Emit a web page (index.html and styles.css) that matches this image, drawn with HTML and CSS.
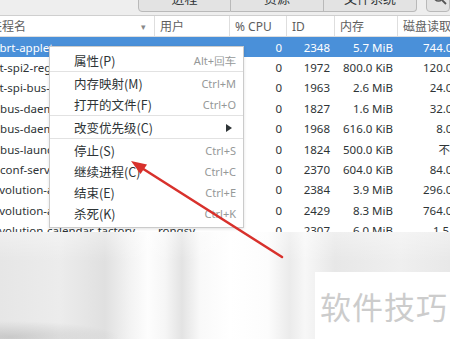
FILE: index.html
```html
<!DOCTYPE html>
<html>
<head>
  <meta charset="utf-8">
  <title>系统监视器</title>
  <link rel="stylesheet" href="styles.css">
</head>
<body>
  <div class="screen">
    <!-- barra superior con pestañas -->
    <div class="toolbar">
      <div class="tabs">
        <span class="tab">进程</span>
        <span class="tab">资源</span>
        <span class="tab">文件系统</span>
      </div>
      <span class="search">
        <svg width="16" height="16" viewBox="0 0 16 16">
          <circle cx="6.5" cy="6.5" r="4.5" fill="none" stroke="#555" stroke-width="1.6"/>
          <line x1="10" y1="10" x2="14" y2="14" stroke="#555" stroke-width="1.8"/>
        </svg>
      </span>
    </div>

    <div class="row head">
      <div class="cell name"><span class="clip">进程名</span><span class="sort">▾</span></div>
      <div class="cell">用户</div>
      <div class="cell">% CPU</div>
      <div class="cell">ID</div>
      <div class="cell">内存</div>
      <div class="cell">磁盘读取</div>
    </div>

    <div class="rows">
      <div class="row selected">
        <div class="cell name"><span class="clip">abrt-applet</span></div>
        <div class="cell">rongsy</div><div class="cell num">0</div><div class="cell num">2348</div>
        <div class="cell num">5.7 MiB</div><div class="cell num">744.0 KiB</div>
      </div>
      <div class="row">
        <div class="cell name"><span class="clip">at-spi2-registryd</span></div>
        <div class="cell">rongsy</div><div class="cell num">0</div><div class="cell num">1972</div>
        <div class="cell num">800.0 KiB</div><div class="cell num">120.0 KiB</div>
      </div>
      <div class="row">
        <div class="cell name"><span class="clip">at-spi-bus-launcher</span></div>
        <div class="cell">rongsy</div><div class="cell num">0</div><div class="cell num">1963</div>
        <div class="cell num">2.6 MiB</div><div class="cell num">24.0 KiB</div>
      </div>
      <div class="row">
        <div class="cell name"><span class="clip">dbus-daemon</span></div>
        <div class="cell">rongsy</div><div class="cell num">0</div><div class="cell num">1827</div>
        <div class="cell num">1.6 MiB</div><div class="cell num">32.0 KiB</div>
      </div>
      <div class="row">
        <div class="cell name"><span class="clip">dbus-daemon</span></div>
        <div class="cell">rongsy</div><div class="cell num">0</div><div class="cell num">1968</div>
        <div class="cell num">616.0 KiB</div><div class="cell num">8.0 KiB</div>
      </div>
      <div class="row">
        <div class="cell name"><span class="clip">dbus-launch</span></div>
        <div class="cell">rongsy</div><div class="cell num">0</div><div class="cell num">1824</div>
        <div class="cell num">500.0 KiB</div><div class="cell num">不适用</div>
      </div>
      <div class="row">
        <div class="cell name"><span class="clip">dconf-service</span></div>
        <div class="cell">rongsy</div><div class="cell num">0</div><div class="cell num">2370</div>
        <div class="cell num">604.0 KiB</div><div class="cell num">84.0 KiB</div>
      </div>
      <div class="row">
        <div class="cell name"><span class="clip">evolution-addressbook-factory</span></div>
        <div class="cell">rongsy</div><div class="cell num">0</div><div class="cell num">2384</div>
        <div class="cell num">3.9 MiB</div><div class="cell num">296.0 KiB</div>
      </div>
      <div class="row">
        <div class="cell name"><span class="clip">evolution-alarm-notify</span></div>
        <div class="cell">rongsy</div><div class="cell num">0</div><div class="cell num">2429</div>
        <div class="cell num">8.3 MiB</div><div class="cell num">764.0 KiB</div>
      </div>
      <div class="row">
        <div class="cell name"><span class="clip">evolution-calendar-factory</span></div>
        <div class="cell">rongsy</div><div class="cell num">0</div><div class="cell num">2307</div>
        <div class="cell num">6.0 MiB</div><div class="cell num">1.5 MiB</div>
      </div>
    </div>

    <!-- zona borrosa de abajo con la marca de agua -->
    <div class="blur-zone">
      <div class="watermark">软件技巧</div>
    </div>

    <!-- menú contextual -->
    <div class="menu">
      <div class="item"><span>属性(P)</span><span class="key">Alt+回车</span></div>
      <div class="sep"></div>
      <div class="item"><span>内存映射(M)</span><span class="key">Ctrl+M</span></div>
      <div class="item"><span>打开的文件(F)</span><span class="key">Ctrl+O</span></div>
      <div class="sep"></div>
      <div class="item"><span>改变优先级(C)</span>
        <svg class="sub" width="6" height="8" viewBox="0 0 6 8"><polygon points="0,0 6,4 0,8" fill="#2e3436"/></svg>
      </div>
      <div class="sep"></div>
      <div class="item"><span>停止(S)</span><span class="key">Ctrl+S</span></div>
      <div class="item"><span>继续进程(C)</span><span class="key">Ctrl+C</span></div>
      <div class="item"><span>结束(E)</span><span class="key">Ctrl+E</span></div>
      <div class="item"><span>杀死(K)</span><span class="key">Ctrl+K</span></div>
    </div>

    <svg class="arrow" width="450" height="339" viewBox="0 0 450 339">
      <line x1="141" y1="167.5" x2="282" y2="257" stroke="#d8312c" stroke-width="2.6" stroke-linecap="round"/>
      <polygon points="131,161 147,164.5 140.5,174" fill="#d8312c"/>
    </svg>
  </div>
</body>
</html>
```

FILE: styles.css
```css
body {
  margin: 0;
  background-color: #ffffff;
  font-family: "Noto Sans", "Noto Sans CJK SC", sans-serif;
  color: #2e3436;
}

.screen {
  position: relative;
  width: 450px;
  height: 339px;
  overflow: hidden;
}

.toolbar {
  height: 15px;
  background-color: #eeeeee;
  border-bottom: 1px solid #cfcfcf;
  display: flex;
  align-items: flex-start;
}

.tabs {
  display: flex;
  margin-left: 138px;
  margin-top: -11px;
}

.tab {
  width: 93px;
  height: 23px;
  padding-top: 1px;
  box-sizing: border-box;
  display: flex;
  justify-content: center;
  background-color: #e3e3e3;
  border: 1px solid #b9b9b9;
  border-left: none;
  font-family: "Noto Sans CJK SC", sans-serif;
  font-size: 13px;
  line-height: 13px;
  color: #2e3436;
}

.tab:first-child {
  border-left: 1px solid #b9b9b9;
  border-bottom-left-radius: 4px;
}

.tab:last-child {
  border-bottom-right-radius: 4px;
}

.search {
  margin-left: 9px;
  margin-top: -11px;
  width: 34px;
  height: 23px;
  box-sizing: border-box;
  border: 1px solid #b9b9b9;
  border-radius: 0 0 4px 4px;
  background-color: #e3e3e3;
  display: flex;
  padding-left: 5px;
}

.search svg {
  margin-top: 0px;
}

.row {
  display: grid;
  grid-template-columns: 155px 75px 57px 48px 63px 80px;
  height: 20.4px;
  font-size: 11.5px;
  align-items: center;
  white-space: nowrap;
}

.row.head {
  height: 21px;
  border-bottom: 1px solid #dedede;
  box-sizing: border-box;
  color: #5e5e5e;
  font-size: 12px;
}

.row.head .cell {
  height: 100%;
  display: flex;
  align-items: center;
  border-right: 1px solid #dedede;
  padding-left: 5px;
  box-sizing: border-box;
}

.row.head .cell.name {
  padding-left: 0;
  justify-content: space-between;
  padding-right: 8px;
}

.row.head .clip {
  margin-left: -10px;
}

.sort {
  font-size: 9px;
  color: #888;
}

.cell {
  overflow: visible;
  padding-left: 3px;
}

.cell.name {
  padding-left: 0;
  overflow: hidden;
}

.clip {
  margin-left: -7px;
}

.cell.num {
  text-align: right;
  padding-right: 5px;
}

.rows {
  height: 195px;
  overflow: hidden;
}

.selected {
  background-color: #4a90d9;
  color: #ffffff;
}

.blur-zone {
  height: 107px;
  display: flex;
  justify-content: flex-end;
  align-items: flex-end;
  background:
    radial-gradient(ellipse 110px 16px at 10px 105px, rgba(0, 0, 0, 0.13), transparent),
    linear-gradient(to bottom, rgba(255, 255, 255, 0.35), rgba(255, 255, 255, 0) 30px),
    linear-gradient(to right, #e6e6e6 0, #ececec 60px, #e0e0e0 105px, #f3f3f3 130px,
      #fdfdfd 148px, #f6f6f6 165px, #e3e3e3 182px, #f9f9f9 200px, #ffffff 230px,
      #fcfcfc 268px, #ebebeb 290px, #f7f7f7 305px, #e7e7e7 335px, #efefef 400px, #e8e8e8 450px);
}

.watermark {
  width: 135px;
  height: 67px;
  background-color: #ffffff;
  font-family: "Noto Sans CJK SC", sans-serif;
  font-size: 31px;
  color: #cccccc;
  display: flex;
  align-items: center;
  padding-left: 5px;
  box-sizing: border-box;
  letter-spacing: 1px;
}

.menu {
  position: absolute;
  left: 49px;
  top: 46px;
  width: 193px;
  padding: 3px 0;
  background-color: #ffffff;
  border: 1px solid #cbcbcb;
  box-shadow: 0 1px 3px rgba(0, 0, 0, 0.12);
  font-family: "Noto Sans CJK SC", sans-serif;
  font-size: 12.5px;
}

.item {
  height: 21px;
  display: flex;
  align-items: center;
  justify-content: space-between;
  padding: 0 7px 0 24px;
}

.key {
  font-family: "Noto Sans", sans-serif;
  font-size: 11px;
  color: #959898;
}

.sub {
  margin-right: 4px;
}

.sep {
  height: 1px;
  background-color: #e2e2e2;
  margin-bottom: 1px;
}

.arrow {
  position: absolute;
  left: 0;
  top: 0;
  pointer-events: none;
}
```
